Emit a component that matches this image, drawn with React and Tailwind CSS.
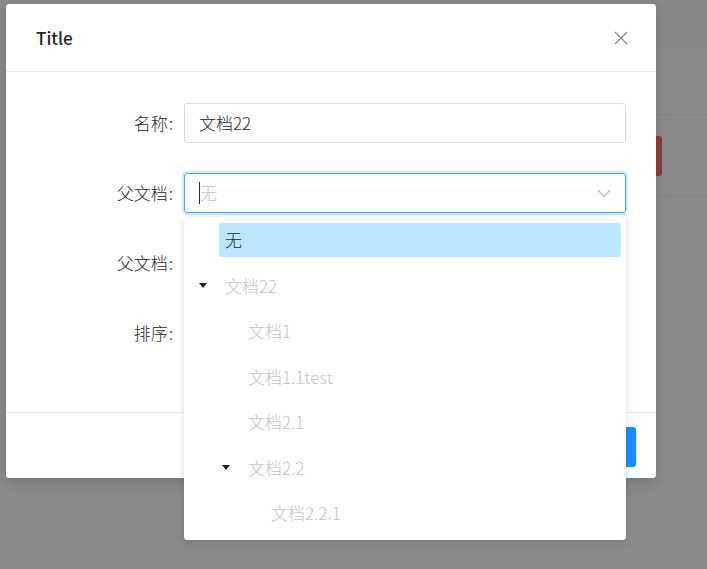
const font = { fontFamily: '"Noto Sans CJK SC", "Noto Sans", sans-serif' }

const treeNodes = [
  { label: '无', level: 0, selected: true },
  { label: '文档22', level: 0, caret: true },
  { label: '文档1', level: 1 },
  { label: '文档1.1test', level: 1 },
  { label: '文档2.1', level: 1 },
  { label: '文档2.2', level: 1, caret: true },
  { label: '文档2.2.1', level: 2 },
]

function Caret() {
  return (
    <svg width="8" height="5" viewBox="0 0 8 5">
      <path d="M0 0 L8 0 L4 5 Z" fill="#1f1f1f" />
    </svg>
  )
}

function TreeRow({ node }) {
  const pad = ['pl-[11px]', 'pl-[34px]', 'pl-[57px]'][node.level]
  return (
    <div className={`flex items-center h-[34px] pr-[5px] ${pad}`}>
      <span className="w-[16px] flex items-center justify-center shrink-0">{node.caret && <Caret />}</span>
      <div
        className={`ml-[8px] flex-1 h-full flex items-center px-[6px] rounded-[3px] text-[17px] font-light ${
          node.selected ? 'bg-[#bae7ff] text-[#262626]' : 'text-[#c4c4c4]'
        }`}
      >
        {node.label}
      </div>
    </div>
  )
}

function FormRow({ label, children }) {
  return (
    <div className="flex items-center h-[40px]">
      <label className="w-[167px] text-right text-[17px] font-light text-[#262626]">
        {label}
        <span className="ml-[1px]">:</span>
      </label>
      <div className="ml-[11px] w-[442px] h-full relative">{children}</div>
    </div>
  )
}

export default function App() {
  return (
    <div className="relative w-[707px] h-[569px] overflow-hidden bg-[#8a8a8a]" style={font}>
      {/* page behind the mask */}
      <div className="h-[47px] bg-[#888888] border-b border-[#858585]" />
      <div className="h-[68px] border-b border-[#848484]" />
      <div className="h-[82px] border-b border-[#848484] flex items-center justify-end pr-[45px]">
        <div className="w-[70px] h-[40px] rounded-[3px] bg-[#8e3c3c]" />
      </div>

      {/* modal */}
      <div className="absolute left-[6px] top-[4px] w-[650px] bg-white rounded-[3px] shadow-[0_4px_12px_rgba(0,0,0,0.15)]">
        <div className="h-[68px] border-b border-[#ececec] flex items-center justify-between pl-[30px] pr-[28px]">
          <span className="text-[17px] font-medium text-[#262626]">Title</span>
          <svg width="14" height="14" viewBox="0 0 14 14">
            <path d="M1 1 L13 13 M13 1 L1 13" stroke="#8c8c8c" strokeWidth="1.4" />
          </svg>
        </div>

        <div className="pt-[31px] pb-[59px] flex flex-col gap-[30px]">
          <FormRow label="名称">
            <div className="h-full border border-[#d9d9d9] rounded-[3px] flex items-center px-[14px] text-[17px] font-light text-[#262626]">
              文档22
            </div>
          </FormRow>
          <FormRow label="父文档">
            <div className="h-full border border-[#40a9ff] rounded-[3px] shadow-[0_0_0_2px_rgba(24,144,255,0.2)] flex items-center pl-[14px] pr-[14px]">
              <span className="w-px h-[22px] bg-[#262626]" />
              <span className="text-[17px] font-light text-[#bfbfbf]">无</span>
              <svg className="ml-auto" width="14" height="9" viewBox="0 0 14 9">
                <path d="M1 1 L7 7.5 L13 1" fill="none" stroke="#bfbfbf" strokeWidth="1.2" />
              </svg>
            </div>
            {/* tree dropdown */}
            <div className="absolute left-0 top-[44px] w-[442px] h-[323px] z-10 bg-white rounded-[3px] shadow-[0_2px_8px_rgba(0,0,0,0.15)] pt-[6px] flex flex-col gap-[11.5px]">
              {treeNodes.map((n) => (
                <TreeRow key={n.label} node={n} />
              ))}
            </div>
          </FormRow>
          <FormRow label="父文档">
            <div className="h-full border border-[#d9d9d9] rounded-[3px]" />
          </FormRow>
          <FormRow label="排序">
            <div className="h-full border border-[#d9d9d9] rounded-[3px]" />
          </FormRow>
        </div>

        <div className="border-t border-[#ececec] h-[66px] flex items-start justify-end pt-[14px] pr-[20px]">
          <div className="w-[80px] h-[40px] rounded-[3px] bg-[#1890ff]" />
        </div>
      </div>
    </div>
  )
}
